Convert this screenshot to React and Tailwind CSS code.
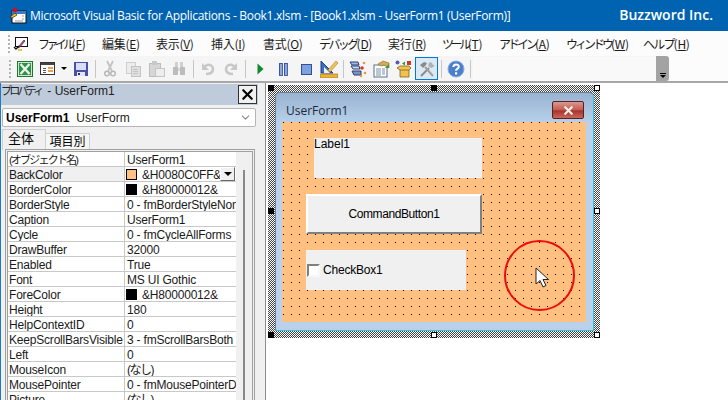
import React from 'react';
import { X, ChevronDown } from 'lucide-react';

const MENUS = [
  { label: 'ファイル', key: 'F', track: 'tracking-[-3.6px]', w: 'w-[64px]' },
  { label: '編集', key: 'E', track: '', w: 'w-[54px]' },
  { label: '表示', key: 'V', track: '', w: 'w-[55px]' },
  { label: '挿入', key: 'I', track: '', w: 'w-[52px]' },
  { label: '書式', key: 'O', track: '', w: 'w-[56px]' },
  { label: 'デバッグ', key: 'D', track: 'tracking-[-2.6px]', w: 'w-[69px]' },
  { label: '実行', key: 'R', track: '', w: 'w-[54px]' },
  { label: 'ツール', key: 'T', track: 'tracking-[-3.4px]', w: 'w-[57px]' },
  { label: 'アドイン', key: 'A', track: 'tracking-[-3px]', w: 'w-[67px]' },
  { label: 'ウィンドウ', key: 'W', track: 'tracking-[-3px]', w: 'w-[77px]' },
  { label: 'ヘルプ', key: 'H', track: 'tracking-[-1.8px]', w: 'w-[50px]' },
];

const ROWS = [
  { name: '(オブジェクト名)', nameTrack: 'text-[11px] tracking-[-1.800px]', value: 'UserForm1' },
  { name: 'BackColor', value: '&H0080C0FF&', swatch: '#ffc080', active: true },
  { name: 'BorderColor', value: '&H80000012&', swatch: '#000000' },
  { name: 'BorderStyle', value: '0 - fmBorderStyleNone' },
  { name: 'Caption', value: 'UserForm1' },
  { name: 'Cycle', value: '0 - fmCycleAllForms' },
  { name: 'DrawBuffer', value: '32000' },
  { name: 'Enabled', value: 'True' },
  { name: 'Font', value: 'MS UI Gothic' },
  { name: 'ForeColor', value: '&H80000012&', swatch: '#000000' },
  { name: 'Height', value: '180' },
  { name: 'HelpContextID', value: '0' },
  { name: 'KeepScrollBarsVisible', value: '3 - fmScrollBarsBoth' },
  { name: 'Left', value: '0' },
  { name: 'MouseIcon', value: '(なし)', valueTrack: 'tracking-[-1.500px]' },
  { name: 'MousePointer', value: '0 - fmMousePointerDefault' },
  { name: 'Picture', value: '(なし)', valueTrack: 'tracking-[-1.500px]' },
];

const HATCH = 'bg-white bg-[conic-gradient(from_270deg_at_1px_1px,#444_90deg,transparent_0),conic-gradient(from_270deg_at_1px_1px,#444_90deg,transparent_0)] bg-[length:2px_2px] bg-[position:0_0,1px_1px]';
const DOTS = 'bg-[conic-gradient(from_270deg_at_1px_1px,#000_90deg,transparent_0)] bg-[length:8px_8px] bg-[position:1px_0]';

const Icon = ({ children }) => (
  <svg width="18" height="18" viewBox="0 0 18 18" shapeRendering="crispEdges">{children}</svg>
);

const AppIcon = () => (
  <svg width="18" height="18" viewBox="0 0 18 18">
    <rect x="3" y="4" width="14" height="12" fill="#fff" stroke="#111" />
    <rect x="3" y="4" width="14" height="3" fill="#3a78c8" />
    <path d="M13 9h2M13 12h2M6 14h8" stroke="#999" />
    <circle cx="6" cy="2.800" r="2.400" fill="#c8102e" />
    <path d="M1 10l5-4 2 2-5 3z" fill="#f2c230" stroke="#222" strokeWidth=".7" />
  </svg>
);

const MenuIcon = () => (
  <svg width="16" height="16" viewBox="0 0 16 16">
    <rect x="2.500" y="1.500" width="12" height="9" fill="#fff" stroke="#111" />
    <path d="M11 4L6 10l-1 2 2-1 5-6z" fill="#d63fa8" stroke="#222" strokeWidth=".6" />
    <path d="M1 11l2 2 3-3" fill="none" stroke="#111" strokeWidth="1.400" />
    <path d="M5 14h4" stroke="#e0b020" strokeWidth="1.400" />
  </svg>
);

const ExcelIcon = () => (
  <Icon>
    <rect x="1" y="1" width="16" height="16" fill="#1c7a2e" />
    <rect x="2" y="2" width="14" height="14" fill="#cfe8cf" />
    <path d="M3 3h12v12H3z" fill="#2f8f45" />
    <path d="M4.500 4l9 10M13.500 4l-9 10" stroke="#e6f3e6" strokeWidth="2.400" shapeRendering="auto" />
  </Icon>
);

const FormIcon = () => (
  <Icon>
    <rect x="1.500" y="2.500" width="14" height="12" fill="#fff" stroke="#333" />
    <rect x="2" y="3" width="13" height="2" fill="#444" />
    <path d="M4 8h3M4 10h3M4 12h3" stroke="#555" />
    <rect x="9" y="7" width="5" height="2" fill="#e8a04c" />
    <rect x="9" y="10" width="5" height="2" fill="#e8a04c" />
  </Icon>
);

const SaveIcon = () => (
  <Icon>
    <rect x="2" y="2" width="14" height="14" fill="#4a4fa8" />
    <rect x="4" y="3" width="10" height="7" fill="#d8def4" />
    <rect x="5" y="12" width="8" height="4" fill="#e4e4ee" />
    <rect x="6" y="13" width="2" height="2" fill="#334" />
  </Icon>
);

const CutIcon = () => (
  <svg width="18" height="18" viewBox="0 0 18 18">
    <path d="M6 1l5 10M12 1l-5 10" stroke="#c4c4c4" strokeWidth="1.800" />
    <circle cx="6" cy="13.500" r="2.300" fill="none" stroke="#b8b8b8" strokeWidth="1.500" />
    <circle cx="12" cy="13.500" r="2.300" fill="none" stroke="#b8b8b8" strokeWidth="1.500" />
  </svg>
);

const CopyIcon = () => (
  <Icon>
    <rect x="2" y="2" width="9" height="11" fill="#ececec" stroke="#cfcfcf" />
    <rect x="7" y="6" width="9" height="10" fill="#e0e0e0" stroke="#c4c4c4" />
    <path d="M9 9h5M9 11h5M9 13h5" stroke="#c4c4c4" />
  </Icon>
);

const PasteIcon = () => (
  <Icon>
    <rect x="2" y="3" width="11" height="13" fill="#d6d6d6" stroke="#bdbdbd" />
    <rect x="5" y="1" width="5" height="4" fill="#c8c8c8" />
    <rect x="8" y="8" width="9" height="8" fill="#ededed" stroke="#c4c4c4" />
  </Icon>
);

const FindIcon = () => (
  <Icon>
    <rect x="5" y="2" width="3" height="5" fill="#cfcfcf" />
    <rect x="10" y="2" width="3" height="5" fill="#cfcfcf" />
    <rect x="3" y="7" width="5" height="8" fill="#bcbcbc" />
    <rect x="10" y="7" width="5" height="8" fill="#bcbcbc" />
    <rect x="8" y="8" width="2" height="3" fill="#d8d8d8" />
  </Icon>
);

const ArrowIcon = ({ flip }) => (
  <svg width="18" height="18" viewBox="0 0 18 18" className={flip ? '-scale-x-100' : ''}>
    <path d="M7 14c5 0 7-2 7-5s-3-5-6-4l-3 2" fill="none" stroke="#c8c8c8" strokeWidth="2.600" />
    <path d="M3 3v7h7z" fill="#c8c8c8" />
  </svg>
);

const RunIcon = () => (
  <svg width="18" height="18" viewBox="0 0 18 18"><path d="M6.500 3.500v11l6-5.500z" fill="#118a2c" /></svg>
);

const PauseIcon = () => (
  <Icon>
    <rect x="5" y="3" width="3" height="12" fill="#8aa8e0" stroke="#27408f" strokeWidth=".8" />
    <rect x="10" y="3" width="3" height="12" fill="#8aa8e0" stroke="#27408f" strokeWidth=".8" />
  </Icon>
);

const StopIcon = () => (
  <Icon>
    <rect x="4" y="4" width="10" height="10" fill="#7ea2e0" stroke="#2f4f9c" />
  </Icon>
);

const DesignIcon = () => (
  <svg width="18" height="18" viewBox="0 0 18 18">
    <path d="M1 1v12h12z" fill="#3d6fc0" stroke="#1f3f88" />
    <path d="M4 7v6h6z" fill="#f2f2f2" />
    <path d="M8 10L16 1l2 2-8 9z" fill="#efc35a" stroke="#a37a20" strokeWidth=".6" />
    <rect x="0" y="14" width="18" height="4" fill="#e9b23a" stroke="#9b6d12" strokeWidth=".6" />
  </svg>
);

const ProjectIcon = () => (
  <svg width="18" height="18" viewBox="0 0 18 18">
    <path d="M1 2h8l1 3H3z" fill="#9fbbe4" stroke="#2a3f77" />
    <path d="M2 6h8l1 3H4z" fill="#c9d9f2" stroke="#2a3f77" />
    <path d="M3 11h9v4H5z" fill="#7a94c8" stroke="#2a3f77" />
    <circle cx="13" cy="8" r="1.800" fill="#d93a2b" />
    <circle cx="15" cy="3" r="1.300" fill="#e89b2f" />
    <circle cx="16" cy="13" r="1.300" fill="#e89b2f" />
    <circle cx="12" cy="16" r="1.200" fill="#e89b2f" />
  </svg>
);

const PropsIcon = () => (
  <svg width="18" height="18" viewBox="0 0 18 18">
    <rect x="2" y="5" width="13" height="12" fill="#fff" stroke="#5a6f8c" />
    <path d="M4 9h5M4 11h5M4 13h5M4 15h5" stroke="#7f8fa5" />
    <rect x="10" y="8" width="3" height="7" fill="#b9c7da" />
    <path d="M6 4l5-3 6 2v5l-5-3-3 1z" fill="#d2ad56" stroke="#8a6b22" strokeWidth=".6" />
    <path d="M13 8l4-4v4z" fill="#3c9a3c" />
  </svg>
);

const BrowserIcon = () => (
  <svg width="18" height="18" viewBox="0 0 18 18">
    <circle cx="2.500" cy="2.500" r="2" fill="#5a55b0" />
    <path d="M7 3.500l3-2v4z" fill="#2f9c3e" />
    <rect x="12" y="1" width="4" height="4" fill="#d4352b" />
    <path d="M2 8l3-2 9 0 2 2-2 2v7H5V10z" fill="#f0c350" stroke="#6d5314" strokeWidth=".7" />
    <path d="M5 10h9" stroke="#6d5314" strokeWidth=".7" />
  </svg>
);

const ToolsIcon = () => (
  <svg width="18" height="18" viewBox="0 0 18 18">
    <path d="M3 16l8-8" stroke="#8a8a8a" strokeWidth="2" />
    <path d="M15 16L7 7" stroke="#a0a0a0" strokeWidth="2" />
    <path d="M2 5l4-3 3 1-1 2-3 3z" fill="#8a8a8a" />
    <path d="M12 2a3.500 3.500 0 0 0-1 5l3 1 3-3-2 0-1-2z" fill="#b0b0b0" />
  </svg>
);

const HelpIcon = () => (
  <svg width="18" height="18" viewBox="0 0 18 18">
    <circle cx="9" cy="9" r="8" fill="#4b7fc9" stroke="#8aaee2" />
    <path d="M6.400 7c0-3.300 5.400-3.300 5.400-.2 0 2-2.800 2-2.800 4" fill="none" stroke="#fff" strokeWidth="2" />
    <rect x="8" y="12.300" width="2.200" height="2.200" fill="#fff" />
  </svg>
);

const Btn = ({ children, selected }) => (
  <div className={`w-[23px] h-[23px] flex items-center justify-center ${selected ? 'border border-[#0078d7] bg-[#dbe9f4]' : ''}`}>
    {children}
  </div>
);

const Sep = () => (
  <div className="w-[6px] h-[18px] flex justify-center">
    <div className="w-px h-full bg-[#c6c6c6]" />
  </div>
);

const Gripper = () => (
  <div className="flex flex-col gap-[2px]">
    {[0, 1, 2, 3, 4].map((i) => (
      <div key={i} className="w-[2px] h-[2px] bg-[#b4b4b4]" />
    ))}
  </div>
);

const Handle = ({ className, white }) => (
  <div className={`absolute w-[6px] h-[6px] border border-black ${white ? 'bg-white' : 'bg-black'} ${className}`} />
);

const PropRow = ({ row }) => (
  <div className="flex h-[15px] border-b border-[#c8c8c8] leading-[16px] text-[12px] tracking-[-0.2px] text-[#1a1a1a] whitespace-nowrap">
    <div className={`w-[117px] pl-px border-r border-[#c8c8c8] overflow-hidden ${row.active ? 'bg-[#f0f0f0]' : ''} ${row.nameTrack || ''}`}>{row.name}</div>
    <div className="relative flex-1 pl-[2px] pt-px flex items-center gap-[5px] overflow-hidden">
      {row.swatch && (
        <span className="w-[11px] h-[11px] -ml-px shrink-0 border border-black" style={{ background: row.swatch }} />
      )}
      <span className={row.valueTrack || ''}>{row.value}</span>
      {row.active && (
        <span className="absolute right-px top-0 w-[15px] h-[14px] bg-[#f0f0f0] border border-t-white border-l-white border-r-[#696969] border-b-[#696969] flex items-center justify-center">
          <span className="w-0 h-0 border-x-[4px] border-x-transparent border-t-[4px] border-t-black" />
        </span>
      )}
    </div>
  </div>
);

const PropertiesPane = () => (
  <div className="w-[262px] h-full shrink-0 bg-[#f0f0f0] border-l border-[#1979ca] flex flex-col overflow-hidden font-['Liberation_Sans','Noto_Sans_CJK_JP',sans-serif]">
    <div className="w-[257px] h-[21px] shrink-0 mt-px bg-[#bdcbda] flex items-center justify-between pr-px">
      <span className="mb-[8px] text-[12px] text-[#222] flex items-center whitespace-nowrap">
        <span className="font-['Noto_Sans_CJK_JP',sans-serif] text-[11px] tracking-[-2.800px]">プロパティ</span>
        <span className="ml-[6px]">- UserForm1</span>
      </span>
      <div className="w-[19px] h-[19px] bg-[#f0f0f0] border border-[#333] flex items-center justify-center">
        <X size={17} strokeWidth={3} color="#000" />
      </div>
    </div>
    <div className="mt-[3px] ml-px w-[254px] h-[19px] shrink-0 bg-white border border-[#b5b5b5] rounded-[2px] flex items-center pl-[3px] pr-[2px] text-[12px] whitespace-nowrap">
      <span className="font-bold">UserForm1</span>
      <span className="ml-[7px] text-[#222]">UserForm</span>
      <ChevronDown size={13} color="#888" className="ml-auto mr-px" />
    </div>
    <div className="mt-[2px] ml-px flex items-end h-[21px] shrink-0 font-['Noto_Sans_CJK_JP',sans-serif] text-black">
      <div className="w-[44px] h-[21px] bg-[#f0f0f0] border border-b-0 border-[#d0d0d0] pl-[5px] text-[13px] leading-[15px]">全体</div>
      <div className="w-[44px] h-[17px] bg-[#f6f6f6] border border-b-0 border-l-0 border-[#d0d0d0] text-center text-[12px] leading-[13px]">項目別</div>
    </div>
    <div className="ml-[4px] w-[250px] flex-1 border border-b-0 border-[#a0a0a0] -mt-px p-px">
      <div className="border border-b-0 border-[#a0a0a0] h-full flex">
        <div className="w-[228px] bg-white">
          {ROWS.map((row) => (
            <PropRow key={row.name} row={row} />
          ))}
        </div>
        <div className="flex-1 flex justify-center pt-[18px]">
          <div className="w-[2px] h-full bg-[#8a8a8a]" />
        </div>
      </div>
    </div>
  </div>
);

const FormDesigner = () => (
  <div className="relative flex-1 h-full bg-white border-l-[3px] border-[#f0f0f0] overflow-hidden">
    <div className="absolute left-0 top-0 bottom-0 w-[1px] bg-[#8c8c8c]" />
    {/* selection frame, positions are the form's place on the designer canvas */}
    <div className={`absolute left-[3px] top-[2px] w-[332px] h-[253px] ${HATCH}`} />
    <Handle className="left-[3px] top-[2px]" />
    <Handle className="left-[166px] top-[2px]" />
    <Handle className="left-[329px] top-[2px]" white />
    <Handle className="left-[3px] top-[125px]" />
    <Handle className="left-[329px] top-[125px]" white />
    <Handle className="left-[3px] top-[249px]" />
    <Handle className="left-[166px] top-[249px]" white />
    <Handle className="left-[329px] top-[249px]" white />

    {/* the form window */}
    <div className="absolute left-[10px] top-[9px] w-[319px] h-[239px] rounded-t-[5px] bg-[#b9d1ea] border border-t-[#6d7f95] border-l-[#6d7f95] border-r-[#2cc3e0] border-b-[#2cc3e0] bg-[linear-gradient(#98b3d1,#b9d1ea_30px)]">
      <div className="absolute left-[10px] top-[10px] text-[12px] leading-[16px] text-[#1d2a3a] font-['Open_Sans',sans-serif]">UserForm1</div>
      <div className="absolute left-[276px] top-[8px] w-[32px] h-[18px] rounded-[2px] border border-[#5a1f24] bg-[linear-gradient(#d99a90,#c25a4e_50%,#a8322a_55%,#c8685a)] flex items-center justify-center">
        <X size={13} strokeWidth={4} color="#f4f0ee" />
      </div>
      <div className="absolute left-[6px] top-[29px] w-[304px] h-[200px] bg-[#ffc080]">
        <div className={`absolute inset-0 ${DOTS}`} />
        <div className="absolute left-[32px] top-[16px] w-[168px] h-[40px] bg-[#f0f0f0] text-[12px] leading-[13px] text-black font-['Liberation_Sans',sans-serif]">Label1</div>
        <div className="absolute left-[24px] top-[72px] w-[176px] h-[40px] bg-[#f0f0f0] border-2 border-t-white border-l-white border-r-[#808080] border-b-[#808080] flex items-center justify-center text-[12px] tracking-[-0.400px] text-black font-['Liberation_Sans',sans-serif]">CommandButton1</div>
        <div className="absolute left-[24px] top-[128px] w-[160px] h-[40px] bg-[#f0f0f0] flex items-center text-[12px] text-black font-['Liberation_Sans',sans-serif]">
          <span className="ml-px w-[13px] h-[13px] bg-white border-2 border-t-[#808080] border-l-[#808080] border-r-[#f8f8f8] border-b-[#f8f8f8]" />
          <span className="ml-[3px] tracking-[-0.2px]">CheckBox1</span>
        </div>
      </div>
    </div>

    {/* annotation over the form */}
    <div className="absolute left-[239px] top-[157px] w-[71px] h-[71px] rounded-full border-[2.500px] border-[#ee0b0b]" />
    <svg className="absolute left-[270px] top-[184px]" width="14" height="22" viewBox="0 0 14 22">
      <path d="M1 1v16l4-3.500 3 6.500 3-1.500-3-6h5.500z" fill="#fff" stroke="#222" strokeWidth="1" />
    </svg>
  </div>
);

export default function App() {
  return (
    <div className="w-[728px] h-[400px] overflow-hidden flex flex-col bg-[#f0f0f0]">
      <div className="h-[31px] shrink-0 bg-[#0063b1] flex items-center pl-[9px] text-white font-['Open_Sans',sans-serif]">
        <AppIcon />
        <span className="ml-[3px] text-[12px] tracking-[-0.3px] whitespace-nowrap">Microsoft Visual Basic for Applications - Book1.xlsm - [Book1.xlsm - UserForm1 (UserForm)]</span>
        <span className="ml-auto mr-[15px] mb-[3px] text-[14px] font-semibold whitespace-nowrap">Buzzword Inc.</span>
      </div>

      <div className="h-[25px] shrink-0 bg-[#fcfcfc] flex items-center pl-[8px] font-['Noto_Sans_CJK_JP',sans-serif] text-[12px] text-[#1a1a1a]">
        <Gripper />
        <div className="ml-[3px] w-[25px]"><MenuIcon /></div>
        <div className="flex whitespace-nowrap">
          {MENUS.map((m) => (
            <span key={m.key} className={`${m.w} tracking-[-0.3px]`}>
              <span className={m.track}>{m.label}</span>(<span className="underline">{m.key}</span>)
            </span>
          ))}
        </div>
      </div>

      <div className="h-[27px] shrink-0 bg-[#fcfcfc] border-b-2 border-[#a8a8a8]">
        <div className="w-[669px] h-full ml-0 bg-[#f5f5f5] flex items-center pl-[9px]">
          <Gripper />
          <div className="w-[2px]" />
          <Btn><ExcelIcon /></Btn>
          <Btn><FormIcon /></Btn>
          <div className="w-[10px] flex justify-center">
            <span className="w-0 h-0 border-x-[3px] border-x-transparent border-t-[3px] border-t-black" />
          </div>
          <Btn><SaveIcon /></Btn>
          <Sep />
          <Btn><CutIcon /></Btn>
          <Btn><CopyIcon /></Btn>
          <Btn><PasteIcon /></Btn>
          <Btn><FindIcon /></Btn>
          <Sep />
          <Btn><ArrowIcon /></Btn>
          <Btn><ArrowIcon flip /></Btn>
          <Sep />
          <Btn><RunIcon /></Btn>
          <Btn><PauseIcon /></Btn>
          <Btn><StopIcon /></Btn>
          <Btn><DesignIcon /></Btn>
          <Sep />
          <Btn><ProjectIcon /></Btn>
          <Btn><PropsIcon /></Btn>
          <Btn><BrowserIcon /></Btn>
          <Btn selected><ToolsIcon /></Btn>
          <Sep />
          <Btn><HelpIcon /></Btn>
          <Sep />
          <div className="w-[183px] h-[24px] bg-[#f9f9f9]" />
          <div className="w-[13px] h-[25px] bg-[#a3a3a3] rounded-r-[3px] flex flex-col items-center justify-end pb-[3px] gap-px">
            <span className="w-[6px] h-px bg-black" />
            <span className="w-0 h-0 border-x-[3px] border-x-transparent border-t-[3px] border-t-black" />
          </div>
        </div>
      </div>

      <div className="flex-1 min-h-0 flex">
        <PropertiesPane />
        <FormDesigner />
      </div>
    </div>
  );
}
